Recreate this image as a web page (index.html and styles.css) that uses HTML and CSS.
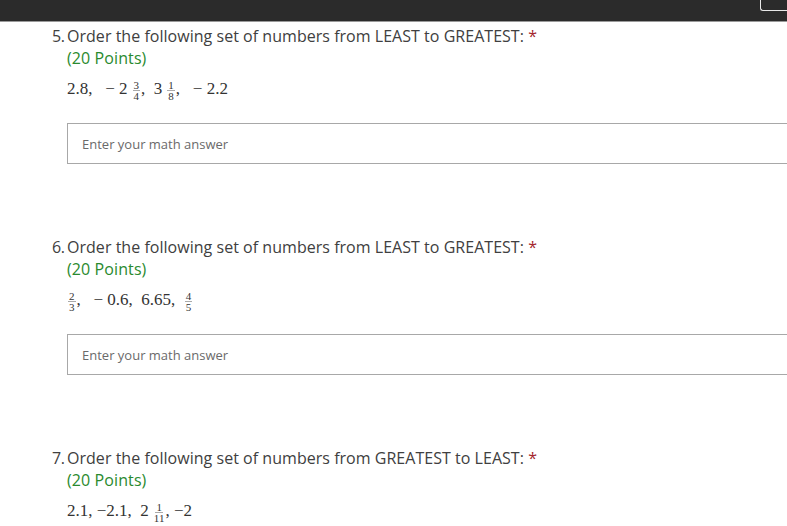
FILE: index.html
```html
<!DOCTYPE html>
<html>
<head>
<meta charset="utf-8">
<link rel="stylesheet" href="styles.css">
</head>
<body>
<div class="topbar"><div class="corner-box"></div></div>
<main class="questions">
  <section class="question">
    <div class="title"><span class="num">5.</span><span class="text">Order the following set of numbers from LEAST to GREATEST: <span class="req">*</span></span></div>
    <div class="body">
      <div class="points">(20 Points)</div>
      <div class="math">2.8,&nbsp;&nbsp; − 2<span class="frac"><span>3</span><span>4</span></span>,&nbsp; 3<span class="frac"><span>1</span><span>8</span></span>,&nbsp;&nbsp; − 2.2</div>
      <div class="answer">Enter your math answer</div>
    </div>
  </section>
  <section class="question">
    <div class="title"><span class="num">6.</span><span class="text">Order the following set of numbers from LEAST to GREATEST: <span class="req">*</span></span></div>
    <div class="body">
      <div class="points">(20 Points)</div>
      <div class="math"><span class="frac first"><span>2</span><span>3</span></span>,&nbsp;&nbsp; − 0.6,&nbsp; 6.65,&nbsp; <span class="frac first"><span>4</span><span>5</span></span></div>
      <div class="answer">Enter your math answer</div>
    </div>
  </section>
  <section class="question last">
    <div class="title"><span class="num">7.</span><span class="text">Order the following set of numbers from GREATEST to LEAST: <span class="req">*</span></span></div>
    <div class="body">
      <div class="points">(20 Points)</div>
      <div class="math">2.1, −2.1,&nbsp; 2<span class="frac"><span>1</span><span>11</span></span>, −2</div>
    </div>
  </section>
</main>
</body>
</html>
```
FILE: styles.css
```css
html, body {
  margin: 0;
  padding: 0;
  background: #ffffff;
  overflow: hidden;
}
body {
  width: 787px;
  height: 526px;
  font-family: "Open Sans", "Noto Sans", sans-serif;
  color: #333333;
}
.topbar {
  height: 21px;
  background: #2b2b2b;
  border-bottom: 1px solid #9a9a9a;
  display: flex;
  justify-content: flex-end;
  align-items: flex-start;
}
.corner-box {
  width: 26px;
  height: 10px;
  border: 1px solid #e8e8e8;
  border-top: none;
  border-right: none;
  border-bottom-left-radius: 3px;
}
.questions {
  padding-left: 52px;
  padding-top: 3px;
}
.question {
  height: 211px;
}
.question.last {
  height: auto;
}
.title {
  display: flex;
  font-size: 16px;
  font-weight: 400;
  line-height: 22px;
  letter-spacing: 0.03px;
  color: #404040;
}
.num {
  width: 15px;
  letter-spacing: -0.5px;
}
.req {
  color: #a4262c;
}
.body {
  padding-left: 15px;
}
.points {
  color: #2a8a2e;
  font-size: 16px;
  font-weight: 400;
  line-height: 22px;
  letter-spacing: 0.1px;
}
.math {
  font-family: "Liberation Serif", "Times New Roman", serif;
  font-size: 17px;
  color: #333333;
  height: 26px;
  margin-top: 7px;
  display: flex;
  align-items: center;
  white-space: pre;
}
.frac {
  display: inline-flex;
  flex-direction: column;
  align-items: center;
  font-size: 11px;
  line-height: 10px;
  margin: 2px 1px 0 5px;
}
.frac span:first-child {
  border-bottom: 1px solid #aaaaaa;
  padding: 0 1px;
}
.frac.first {
  margin-left: 1px;
}
.answer {
  margin-top: 21px;
  width: 740px;
  height: 39px;
  border: 1px solid #a8a8a8;
  font-size: 13px;
  color: #6a6a6a;
  display: flex;
  align-items: center;
  padding-left: 14px;
}
```
